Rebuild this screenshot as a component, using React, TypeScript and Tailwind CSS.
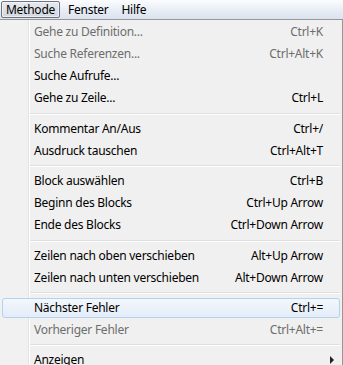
type Item =
  | { kind: "sep"; h: string }
  | {
      kind: "item";
      label: string;
      shortcut?: string;
      disabled?: boolean;
      active?: boolean;
      submenu?: boolean;
    };

const items: Item[] = [
  { kind: "item", label: "Gehe zu Definition...", shortcut: "Ctrl+K", disabled: true },
  { kind: "item", label: "Suche Referenzen...", shortcut: "Ctrl+Alt+K", disabled: true },
  { kind: "item", label: "Suche Aufrufe..." },
  { kind: "item", label: "Gehe zu Zeile...", shortcut: "Ctrl+L" },
  { kind: "sep", h: "h-[9px]" },
  { kind: "item", label: "Kommentar An/Aus", shortcut: "Ctrl+/" },
  { kind: "item", label: "Ausdruck tauschen", shortcut: "Ctrl+Alt+T" },
  { kind: "sep", h: "h-[8px]" },
  { kind: "item", label: "Block auswählen", shortcut: "Ctrl+B" },
  { kind: "item", label: "Beginn des Blocks", shortcut: "Ctrl+Up Arrow" },
  { kind: "item", label: "Ende des Blocks", shortcut: "Ctrl+Down Arrow" },
  { kind: "sep", h: "h-[9px]" },
  { kind: "item", label: "Zeilen nach oben verschieben", shortcut: "Alt+Up Arrow" },
  { kind: "item", label: "Zeilen nach unten verschieben", shortcut: "Alt+Down Arrow" },
  { kind: "sep", h: "h-[8px]" },
  { kind: "item", label: "Nächster Fehler", shortcut: "Ctrl+=", active: true },
  { kind: "item", label: "Vorheriger Fehler", shortcut: "Ctrl+Alt+=", disabled: true },
  { kind: "sep", h: "h-[8px]" },
  { kind: "item", label: "Anzeigen", submenu: true },
];

function MenuRow({ item }: { item: Extract<Item, { kind: "item" }> }) {
  const color = item.disabled ? "text-[#6d6d6d]" : "text-black";

  if (item.active) {
    return (
      <div className="h-[22px] py-[1px] pl-[2px] pr-[2px]">
        <div
          className={`h-[20px] flex items-center pl-[31px] pr-[16px] rounded-[3px] border border-[#b4d1f1] bg-gradient-to-b from-[#f3f7fc] to-[#e4edf8] ${color}`}
        >
          <span className="flex-1">{item.label}</span>
          {item.shortcut && <span>{item.shortcut}</span>}
        </div>
      </div>
    );
  }

  return (
    <div className={`h-[22px] flex items-center pl-[34px] pr-[19px] ${color}`}>
      <span className="flex-1">{item.label}</span>
      {item.shortcut && <span>{item.shortcut}</span>}
      {item.submenu && (
        <svg width="5" height="8" viewBox="0 0 5 8" className="mr-[-12px] ml-[6px]">
          <path d="M0 0 L4 4 L0 8 Z" fill="#222" />
        </svg>
      )}
    </div>
  );
}

export default function App() {
  return (
    <div
      className="w-[343px] h-[365px] overflow-hidden flex flex-col text-[12px] leading-none tracking-[-0.25px] bg-[#f0f0f0]"
      style={{ fontFamily: '"Noto Sans", "Open Sans", sans-serif' }}
    >
      {/* menu bar */}
      <div className="h-[19px] shrink-0 flex items-center bg-gradient-to-b from-[#fbfcfe] via-[#e9eef6] to-[#dbe3ef] text-black">
        <div className="ml-[1px] h-[17px] w-[59px] flex items-center justify-center rounded-[2px] border border-[#6f7480] bg-gradient-to-b from-[#e6e9ee] to-[#d3d8e0] shadow-[inset_0_0_0_1px_rgba(255,255,255,0.5)]">
          Methode
        </div>
        <div className="ml-[8px]">Fenster</div>
        <div className="ml-[13px]">Hilfe</div>
      </div>

      {/* dropdown */}
      <div className="flex-1 border-t border-r border-[#979797] bg-[linear-gradient(to_right,#f1f1f1_28px,#e2e3e3_28px,#e2e3e3_29px,#ffffff_29px,#ffffff_30px,#f0f0f0_30px)] pt-[1px]">
        {items.map((item, i) =>
          item.kind === "sep" ? (
            <div key={i} className={`${item.h} flex flex-col justify-center pl-[30px] pr-[2px]`}>
              <div className="h-px bg-[#e0e0e0]" />
              <div className="h-px bg-white" />
            </div>
          ) : (
            <MenuRow key={i} item={item} />
          )
        )}
      </div>
    </div>
  );
}
